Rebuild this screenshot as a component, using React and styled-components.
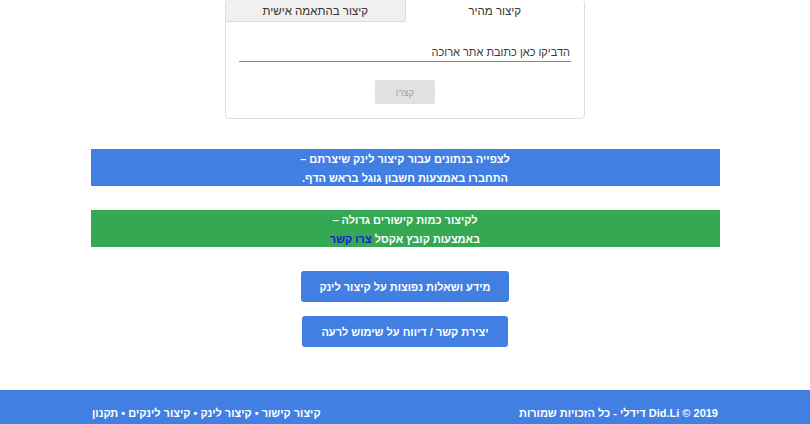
import React from "react";
import styled, { createGlobalStyle } from "styled-components";

const Global = createGlobalStyle`
  html, body {
    margin: 0;
    padding: 0;
    background: #fff;
    font-family: "Liberation Sans", Arial, "DejaVu Sans", sans-serif;
  }
`;

const Page = styled.div`
  direction: rtl;
  display: flex;
  flex-direction: column;
  align-items: center;
  min-height: 424px;
`;

const Card = styled.div`
  width: 358px;
  margin-top: -1px;
  border: 1px solid #dedede;
  border-radius: 4px;
  background: #fff;
  overflow: hidden;
`;

const Tabs = styled.div`
  display: flex;
`;

const Tab = styled.div`
  flex: 1;
  height: 21px;
  line-height: 23px;
  text-align: center;
  font-size: 11.5px;
  color: #333;
  background: ${p => (p.active ? "#fff" : "#f0f0f0")};
  border-bottom: 1px solid ${p => (p.active ? "transparent" : "#dcdcdc")};
  border-right: ${p => (p.active ? "none" : "1px solid #dcdcdc")};
`;

const CardBody = styled.div`
  padding: 16px 13px 14px;
  display: flex;
  flex-direction: column;
  align-items: center;
`;

const UrlInput = styled.input`
  direction: rtl;
  width: 100%;
  box-sizing: border-box;
  border: none;
  border-bottom: 1px solid #8a8a8a;
  outline: none;
  font-family: inherit;
  font-size: 11px;
  height: 24px;
  padding: 5px 1px 0;
  color: #333;
  &::placeholder {
    color: #3a3a3a;
    opacity: 1;
  }
`;

const Shorten = styled.button`
  margin-top: 18px;
  width: 60px;
  height: 24px;
  border: none;
  border-radius: 2px;
  background: #e2e2e2;
  color: #a0a0a0;
  font-family: inherit;
  font-size: 9.5px;
`;

const Banner = styled.div`
  width: 629px;
  box-sizing: border-box;
  padding-top: 1px;
  height: 37px;
  margin-top: ${p => p.top}px;
  background: ${p => p.bg};
  color: #fff;
  font-weight: bold;
  font-size: 11px;
  line-height: 18.5px;
  text-align: center;
`;

const BannerLink = styled.a`
  color: #1a1ad0;
  text-decoration: none;
`;

const Actions = styled.div`
  margin-top: 24px;
  display: flex;
  flex-direction: column;
  align-items: center;
  gap: 14px;
`;

const ActionButton = styled.button`
  width: ${p => p.w}px;
  height: 31px;
  border: none;
  border-radius: 3px;
  background: #427fe2;
  color: #fff;
  font-family: inherit;
  font-weight: bold;
  font-size: 11px;
  direction: rtl;
`;

const Footer = styled.footer`
  margin-top: 43px;
  align-self: stretch;
  background: #427fe2;
  height: 40px;
  display: flex;
  justify-content: center;
`;

const FooterInner = styled.div`
  width: 626px;
  display: flex;
  justify-content: space-between;
  padding-top: 17px;
  color: #fff;
  font-weight: bold;
  font-size: 11px;
`;

export default function App() {
  return (
    <>
      <Global />
      <Page>
        <Card>
          <Tabs>
            <Tab active>קיצור מהיר</Tab>
            <Tab>קיצור בהתאמה אישית</Tab>
          </Tabs>
          <CardBody>
            <UrlInput placeholder="הדביקו כאן כתובת אתר ארוכה" />
            <Shorten>קצרו</Shorten>
          </CardBody>
        </Card>

        <Banner top={30} bg="#427fe2">
          לצפייה בנתונים עבור קיצור לינק שיצרתם –
          <br />
          התחברו באמצעות חשבון גוגל בראש הדף.
        </Banner>

        <Banner top={24} bg="#34a853">
          לקיצור כמות קישורים גדולה –
          <br />
          באמצעות קובץ אקסל <BannerLink href="#">צרו קשר</BannerLink>
        </Banner>

        <Actions>
          <ActionButton w={208}>מידע ושאלות נפוצות על קיצור לינק</ActionButton>
          <ActionButton w={206}>יצירת קשר / דיווח על שימוש לרעה</ActionButton>
        </Actions>

        <Footer>
          <FooterInner>
            <span>2019 © Did.Li דידלי - כל הזכויות שמורות</span>
            <span>קיצור קישור • קיצור לינק • קיצור לינקים • תקנון</span>
          </FooterInner>
        </Footer>
      </Page>
    </>
  );
}
